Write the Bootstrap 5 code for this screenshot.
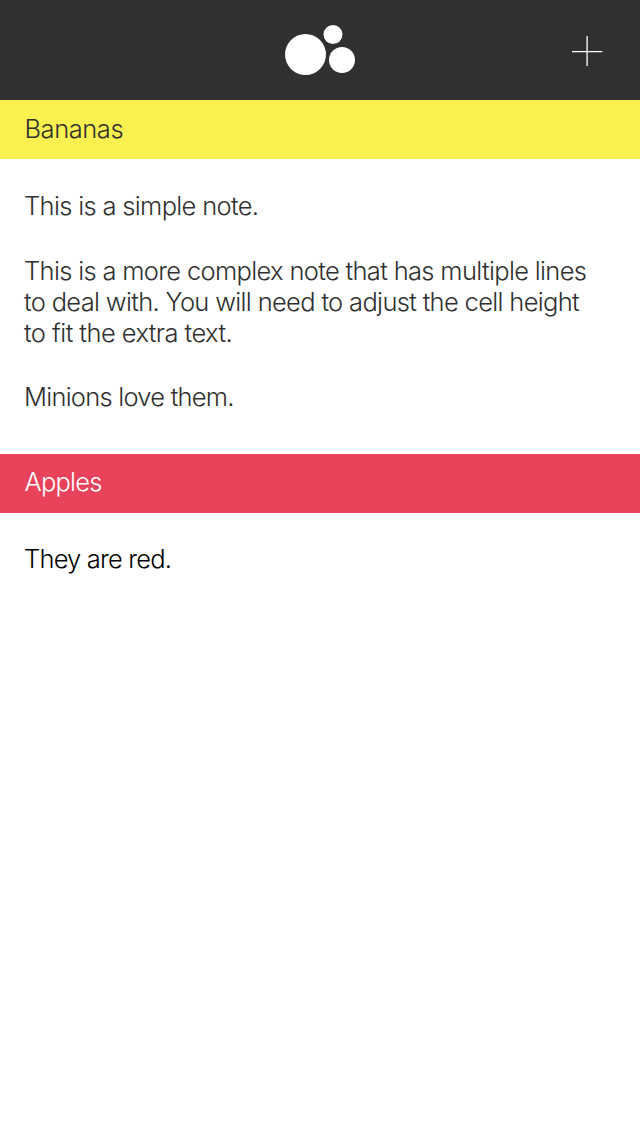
<!DOCTYPE html>
<html lang="en">
<head>
<meta charset="utf-8">
<meta name="viewport" content="width=device-width, initial-scale=1">
<title>Notes</title>
<link href="https://cdn.jsdelivr.net/npm/bootstrap@5.3.0/dist/css/bootstrap.min.css" rel="stylesheet">
<style>
  body { font-family: Inter, "Liberation Sans", Arial, sans-serif; font-weight: 300; font-size: 25.5px; line-height: 31px; letter-spacing: -0.67px; color: #303030; background: #fff; }
  .topbar { height: 100px; background: #303030; display: grid; grid-template-columns: 1fr 70px 1fr; }
  .add-btn { width: 32px; height: 32px; margin-right: 37px; color: #fff; line-height: 0; }
  .section-title { height: 59px; padding-left: 24.5px; font-size: 25.5px; line-height: 57px; font-weight: 300; }
  .bananas { background: #faf04f; letter-spacing: -0.45px; }
  .apples { background: #e9435b; color: #fff; letter-spacing: -0.75px; line-height: 56px; }
  .notes { padding: 31px 24px 0; }
  .filled { height: 295px; }
  .notes li { margin-bottom: 33px; }
  .notes li:first-child { margin-bottom: 34px; }
  .notes li span { display: block; white-space: nowrap; width: max-content; }
  .notes .closing { letter-spacing: -0.76px; }
  .notes .short-line { letter-spacing: -0.55px; }
  .plain { color: #000; letter-spacing: -0.8px; padding-top: 30px; }
</style>
</head>
<body>
<header class="topbar align-items-center">
  <span></span>
  <svg width="70" height="50" viewBox="0 0 70 50" fill="#fff" role="img" aria-label="Logo"><circle cx="20.5" cy="29.5" r="20.5"/><circle cx="48" cy="9.5" r="9.5"/><circle cx="57" cy="35" r="13"/></svg>
  <button class="add-btn btn p-0 border-0 ms-auto" aria-label="Add note"><svg width="32" height="32" viewBox="0 0 32 32" fill="none" stroke="#fff" stroke-width="1.3"><path d="M1 17.65H31.3M16.1 2V32.5"/></svg></button>
</header>
<main>
  <section>
    <h2 class="section-title bananas mb-0"><span>Bananas</span></h2>
    <ul class="notes filled list-unstyled mb-0">
      <li><span>This is a simple note.</span></li>
      <li><span>This is a more complex note that has multiple lines</span><span>to deal with. You will need to adjust the cell height</span><span class="short-line">to fit the extra text.</span></li>
      <li><span class="closing">Minions love them.</span></li>
    </ul>
  </section>
  <section>
    <h2 class="section-title apples mb-0"><span>Apples</span></h2>
    <ul class="notes plain list-unstyled mb-0"><li><span>They are red.</span></li></ul>
  </section>
</main>
<script src="https://cdn.jsdelivr.net/npm/bootstrap@5.3.0/dist/js/bootstrap.bundle.min.js"></script>
</body>
</html>
